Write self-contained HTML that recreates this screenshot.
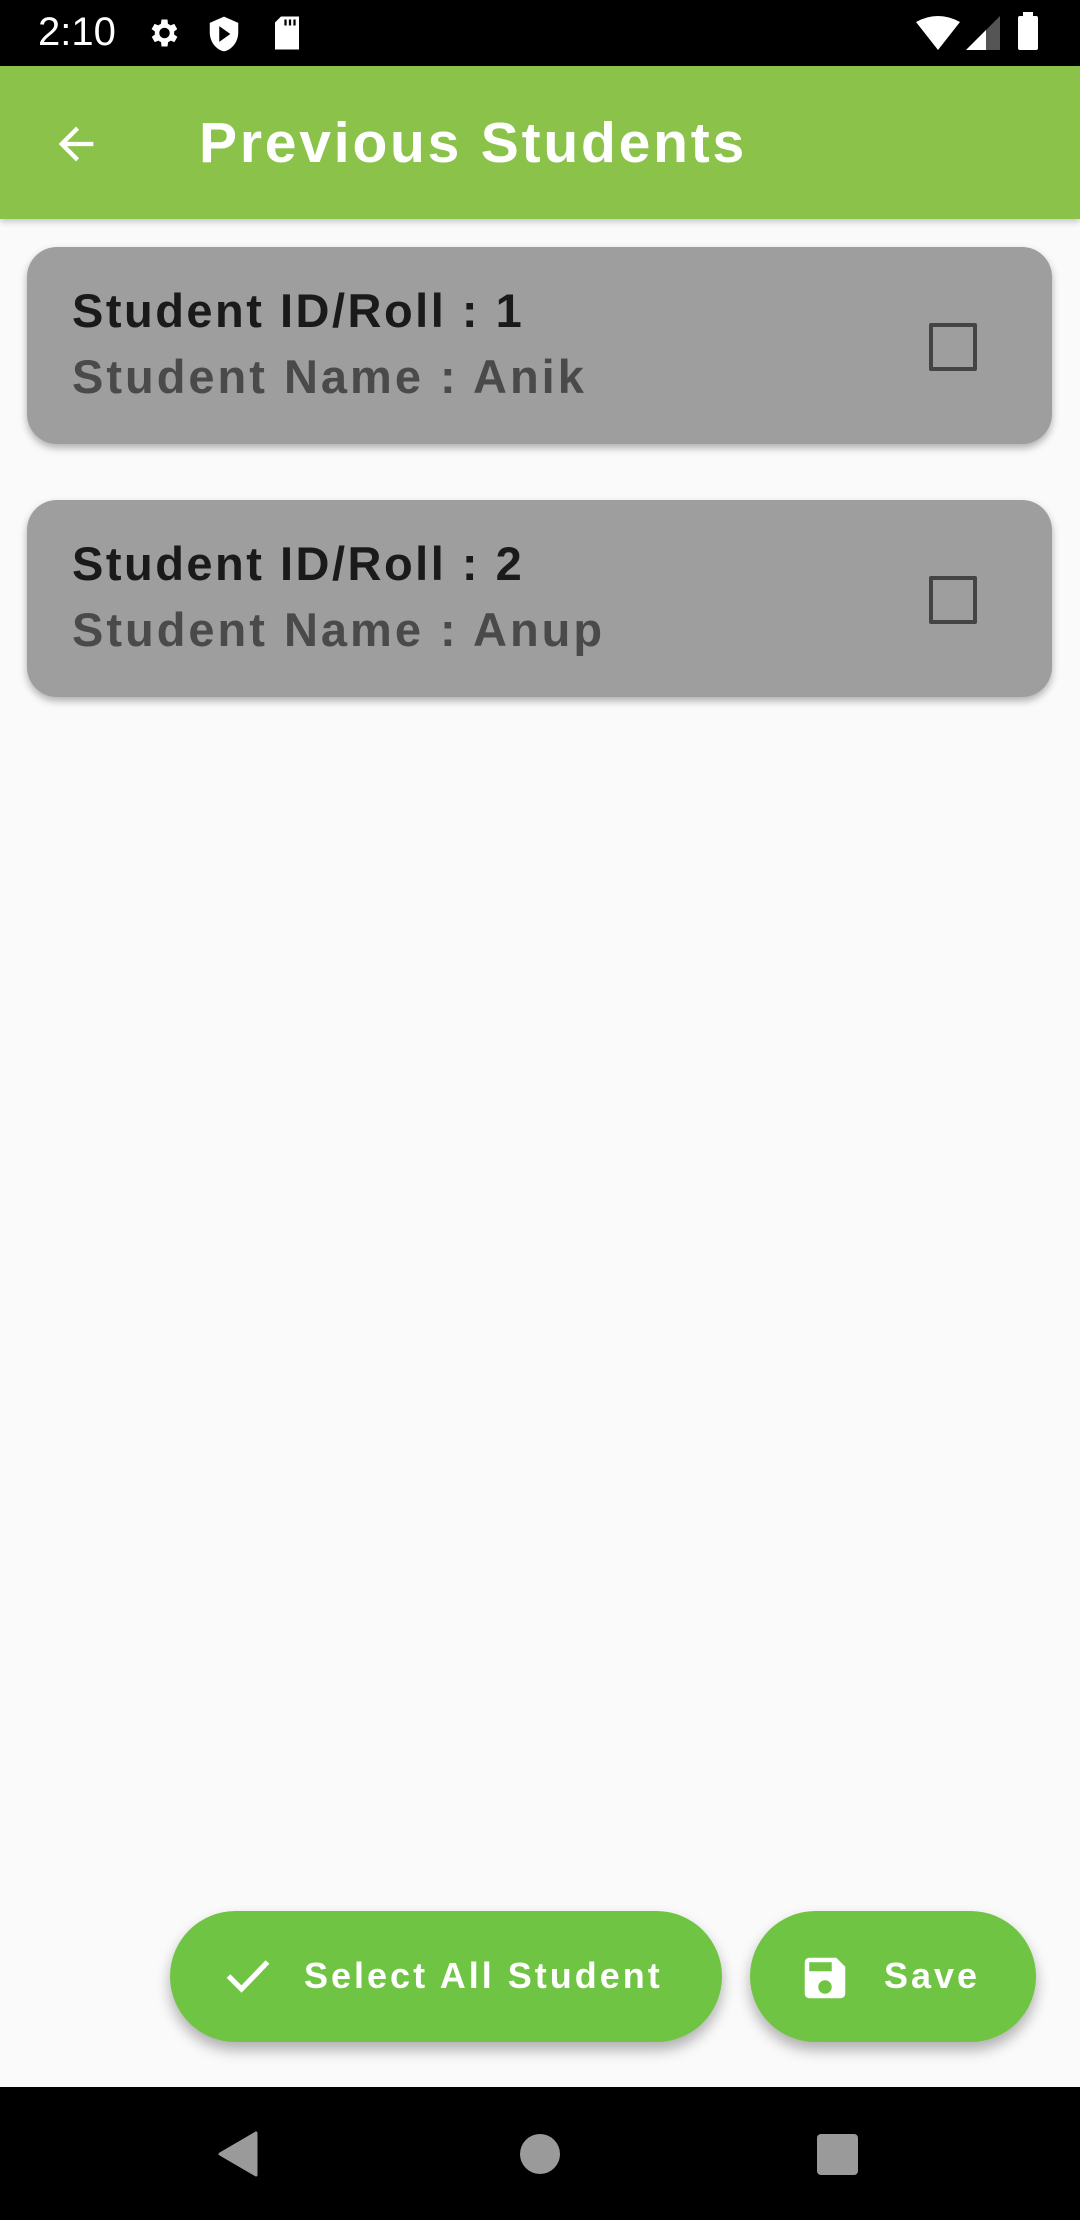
<!DOCTYPE html>
<html><head><meta charset="utf-8"><style>
body{margin:0;width:1080px;height:2220px;background:#fafafa;position:relative;overflow:hidden;font-family:"Liberation Sans",sans-serif}
.status{position:absolute;top:0;left:0;width:1080px;height:66px;background:#000;color:#fff}
.bar{position:absolute;top:66px;left:0;width:1080px;height:153px;background:#8bc34a;box-shadow:0 3px 6px rgba(0,0,0,.2)}
.title{position:absolute;left:199px;top:106px;font-size:57px;font-weight:bold;color:#fff;line-height:74px;letter-spacing:2.8px}
.card{position:absolute;left:27px;width:1025px;height:197px;background:#9e9e9e;border-radius:30px;box-shadow:0 4px 8px rgba(0,0,0,.3)}
.l1{position:absolute;left:45px;top:36px;font-size:47px;font-weight:bold;color:#1a1a1a;letter-spacing:2.5px}
.l2{position:absolute;left:45px;top:102px;font-size:47px;font-weight:bold;color:#4a4a4a;letter-spacing:3px}
.cb{position:absolute;left:902px;top:76px;width:40px;height:40px;border:4px solid #444;border-radius:2px}
.btn{position:absolute;top:1911px;height:131px;border-radius:66px;background:#70c443;box-shadow:0 8px 14px rgba(0,0,0,.3);color:#fff;font-size:36px;font-weight:bold;letter-spacing:3px}
.nav{position:absolute;top:2087px;left:0;width:1080px;height:133px;background:#000}
</style></head><body>
<div class="status">
<div style="position:absolute;left:38px;top:10px;font-size:40px">2:10</div>
<svg style="position:absolute;left:145px;top:15px" width="36" height="36" viewBox="0 0 24 24"><path fill="#fff" d="M19.4 13a7.5 7.5 0 000-2l2.1-1.6-2-3.5-2.5 1a7 7 0 00-1.7-1L15 3h-4l-.4 2.9a7 7 0 00-1.700 1l-2.5-1-2 3.5L6.6 11a7.5 7.5 0 000 2l-2.1 1.6 2 3.5 2.5-1a7 7 0 001.7 1L11 21h4l.4-2.9a7 7 0 001.7-1l2.5 1 2-3.5zM13 15.5a3.5 3.5 0 110-7 3.5 3.5 0 010 7z"/></svg>
<svg style="position:absolute;left:208px;top:15px" width="32" height="38" viewBox="0 0 20 24"><path fill="#fff" d="M10 1L1 5v6c0 6 4 11 9 12 5-1 9-6 9-12V5z"/><path fill="#000" d="M7 7l7 5-7 5z"/></svg>
<svg style="position:absolute;left:272px;top:15px" width="30" height="36" viewBox="0 0 20 24"><path fill="#fff" d="M6 1h12v22H2V5z"/><path stroke="#000" stroke-width="1.5" d="M9 3v4M12 3v4M15 3v4"/></svg>
<svg style="position:absolute;left:916px;top:16px" width="44" height="34" viewBox="0 0 44 34"><path fill="#fff" d="M0 6Q22-6 44 6L22 34z"/></svg>
<svg style="position:absolute;left:966px;top:16px" width="34" height="34"><path fill="#555" d="M34 0V34H0z"/><path fill="#fff" d="M20 14V34H0z"/></svg>
<div style="position:absolute;left:1018px;top:16px;width:20px;height:34px;background:#fff;border-radius:2px"></div>
<div style="position:absolute;left:1023px;top:12px;width:10px;height:5px;background:#fff"></div>
</div>
<div class="bar">
<svg style="position:absolute;left:50px;top:52px" width="52" height="52" viewBox="0 0 24 24"><path fill="#fff" d="M20 11H7.8l5.6-5.6L12 4l-8 8 8 8 1.4-1.4L7.8 13H20z"/></svg>
</div>
<div class="title">Previous Students</div>
<div class="card" style="top:247px"><div class="l1">Student ID/Roll : 1</div><div class="l2">Student Name : Anik</div><div class="cb"></div></div>
<div class="card" style="top:500px"><div class="l1">Student ID/Roll : 2</div><div class="l2">Student Name : Anup</div><div class="cb"></div></div>
<div class="btn" style="left:170px;width:552px">
<svg style="position:absolute;left:50px;top:38px" width="56" height="52" viewBox="0 0 24 24"><path fill="none" stroke="#fff" stroke-width="2.4" d="M3 12.5l6 6L21 6"/></svg>
<div style="position:absolute;left:134px;top:44px">Select All Student</div></div>
<div class="btn" style="left:750px;width:286px">
<svg style="position:absolute;left:48px;top:40px" width="54" height="54" viewBox="0 0 24 24"><path fill="#fff" d="M17 3H5a2 2 0 00-2 2v14a2 2 0 002 2h14a2 2 0 002-2V7zm-5 16a3 3 0 110-6 3 3 0 010 6zm3-10H5V5h10z"/></svg>
<div style="position:absolute;left:134px;top:44px">Save</div></div>
<div class="nav">
<svg style="position:absolute;left:218px;top:44px" width="40" height="46"><path fill="#9a9a9a" d="M38 2V44L2 23z" stroke="#9a9a9a" stroke-linejoin="round" stroke-width="3"/></svg>
<div style="position:absolute;left:520px;top:47px;width:40px;height:40px;border-radius:50%;background:#9a9a9a"></div>
<div style="position:absolute;left:817px;top:47px;width:41px;height:41px;border-radius:4px;background:#9a9a9a"></div>
</div>
</body></html>
